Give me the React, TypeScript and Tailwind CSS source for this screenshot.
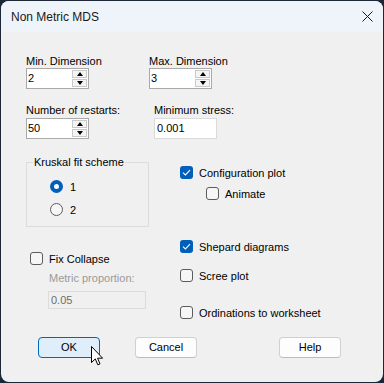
import React from 'react';

const font = { fontFamily: '"Liberation Sans", Arial, sans-serif' };

const SpinBox: React.FC<{ value: string }> = ({ value }) => {
  return (
    <div className="flex h-[21px] w-[63px] border border-[#a9a9a9] bg-white">
      <div className="flex-1 pl-[1px] leading-[19px]">{value}</div>
      <div className="flex w-[16px] flex-col gap-[1px] py-[1px] pr-[1px]">
        <div className="flex flex-1 items-center justify-center border border-[#c9c9c9] bg-[#f4f4f4]">
          <svg width="6" height="4" viewBox="0 0 6 4"><path d="M3 0 L6 4 L0 4 Z" fill="#000" /></svg>
        </div>
        <div className="flex flex-1 items-center justify-center border border-[#c9c9c9] bg-[#f4f4f4]">
          <svg width="6" height="4" viewBox="0 0 6 4"><path d="M0 0 L6 0 L3 4 Z" fill="#000" /></svg>
        </div>
      </div>
    </div>
  );
};

const CheckBox: React.FC<{ label: string; checked?: boolean; className?: string }> = ({ label, checked, className }) => {
  return (
    <div className={`flex h-[13px] items-center ${className ?? ''}`}>
      {checked ? (
        <div className="flex h-[13px] w-[13px] items-center justify-center rounded-[3px] bg-[#005fb8]">
          <svg width="9" height="7" viewBox="0 0 9 7">
            <path d="M1 3.6 L3.4 6 L8 1.2" fill="none" stroke="#fff" strokeWidth="1.1" />
          </svg>
        </div>
      ) : (
        <div className="h-[13px] w-[13px] rounded-[3px] border border-[#5c5c5c] bg-[#f6f6f6]" />
      )}
      <span className="ml-[6px] leading-[14px]">{label}</span>
    </div>
  );
};

const Radio: React.FC<{ label: string; checked?: boolean; className?: string }> = ({ label, checked, className }) => {
  return (
    <div className={`flex h-[13px] items-center ${className ?? ''}`}>
      {checked ? (
        <div className="flex h-[13px] w-[13px] items-center justify-center rounded-full bg-[#005fb8]">
          <div className="h-[5px] w-[5px] rounded-full bg-white" />
        </div>
      ) : (
        <div className="h-[13px] w-[13px] rounded-full border border-[#5c5c5c] bg-[#f6f6f6]" />
      )}
      <span className="ml-[7px] leading-[14px]">{label}</span>
    </div>
  );
};

const Button: React.FC<{ label: string; primary?: boolean; className?: string }> = ({ label, primary, className }) => {
  return (
    <div
      className={`flex h-[21px] w-[62px] items-center justify-center rounded-[4px] border ${
        primary ? 'border-[#0067c0] bg-[#e0eef9]' : 'border-[#d0d0d0] border-b-[#bcbcbc] bg-[#fdfdfd]'
      } ${className ?? ''}`}
    >
      {label}
    </div>
  );
};

const App: React.FC = () => {
  return (
    <div className="h-[383px] w-[384px] bg-[#1b2736] p-px text-[11px] text-black" style={font}>
      <div className="flex h-full flex-col overflow-hidden rounded-[8px] bg-[#f0f0f0]">
        {/* Title bar */}
        <div className="flex h-[31px] items-center justify-between bg-[#eef4f9] pl-[10px] pr-[10px]">
          <span className="text-[12px] text-[#1a1a1a]">Non Metric MDS</span>
          <svg width="11" height="11" viewBox="0 0 11 11">
            <path d="M0.5 0.5 L10.5 10.5 M10.5 0.5 L0.5 10.5" stroke="#1a1a1a" strokeWidth="1" />
          </svg>
        </div>

        {/* Body */}
        <div className="relative flex flex-1 flex-col pl-[25px] pt-[22px]">
          {/* Dimension row */}
          <div className="flex">
            <div className="w-[123px]">
              <div className="leading-[14px]">Min. Dimension</div>
              <SpinBox value="2" />
            </div>
            <div>
              <div className="leading-[14px]">Max. Dimension</div>
              <SpinBox value="3" />
            </div>
          </div>

          {/* Restarts row */}
          <div className="mt-[14px] flex">
            <div className="w-[128px]">
              <div className="mb-px leading-[14px]">Number of restarts:</div>
              <SpinBox value="50" />
            </div>
            <div>
              <div className="mb-px leading-[14px]">Minimum stress:</div>
              <div className="h-[21px] w-[63px] border border-[#dadada] bg-white pl-[2px] leading-[19px]">0.001</div>
            </div>
          </div>

          {/* Middle section */}
          <div className="mt-[16px] flex">
            <div className="w-[123px]">
              <fieldset className="border border-[#dcdcdc] pb-[10px] pl-[23px]">
                <legend className="-ml-[17px] px-[1px] leading-[14px]">Kruskal fit scheme</legend>
                <Radio label="1" checked className="mt-[11px]" />
                <Radio label="2" className="mt-[10px]" />
              </fieldset>
              <CheckBox label="Fix Collapse" className="ml-[4px] mt-[25px]" />
              <div className="ml-[23px] mt-[6px] leading-[14px] text-[#9a9a9a]">Metric proportion:</div>
              <div className="ml-[22px] mt-[6px] h-[18px] w-[98px] border border-[#dcdcdc] pl-[2px] leading-[16px] text-[#6d6d6d]">
                0.05
              </div>
            </div>
            <div className="ml-[31px] pt-[11px]">
              <CheckBox label="Configuration plot" checked />
              <CheckBox label="Animate" className="ml-[26px] mt-[8px]" />
              <CheckBox label="Shepard diagrams" checked className="mt-[40px]" />
              <CheckBox label="Scree plot" className="mt-[16px]" />
              <CheckBox label="Ordinations to worksheet" className="mt-[24px]" />
            </div>
          </div>

          {/* Buttons */}
          <div className="mt-[18px] flex">
            <Button label="OK" primary className="ml-[12px]" />
            <Button label="Cancel" className="ml-[35px]" />
            <Button label="Help" className="ml-[82px]" />
          </div>

          {/* Mouse cursor */}
          <svg className="absolute left-[90px] top-[314px]" width="13" height="21" viewBox="0 0 13 21">
            <path
              d="M0.5 0.5 L0.5 16.5 L4.3 12.9 L6.8 18.8 L9 17.9 L6.6 12.2 L11.6 12.2 Z"
              fill="#fff"
              stroke="#000"
              strokeWidth="1"
              strokeLinejoin="round"
            />
          </svg>
        </div>
      </div>
    </div>
  );
};

export default App;
